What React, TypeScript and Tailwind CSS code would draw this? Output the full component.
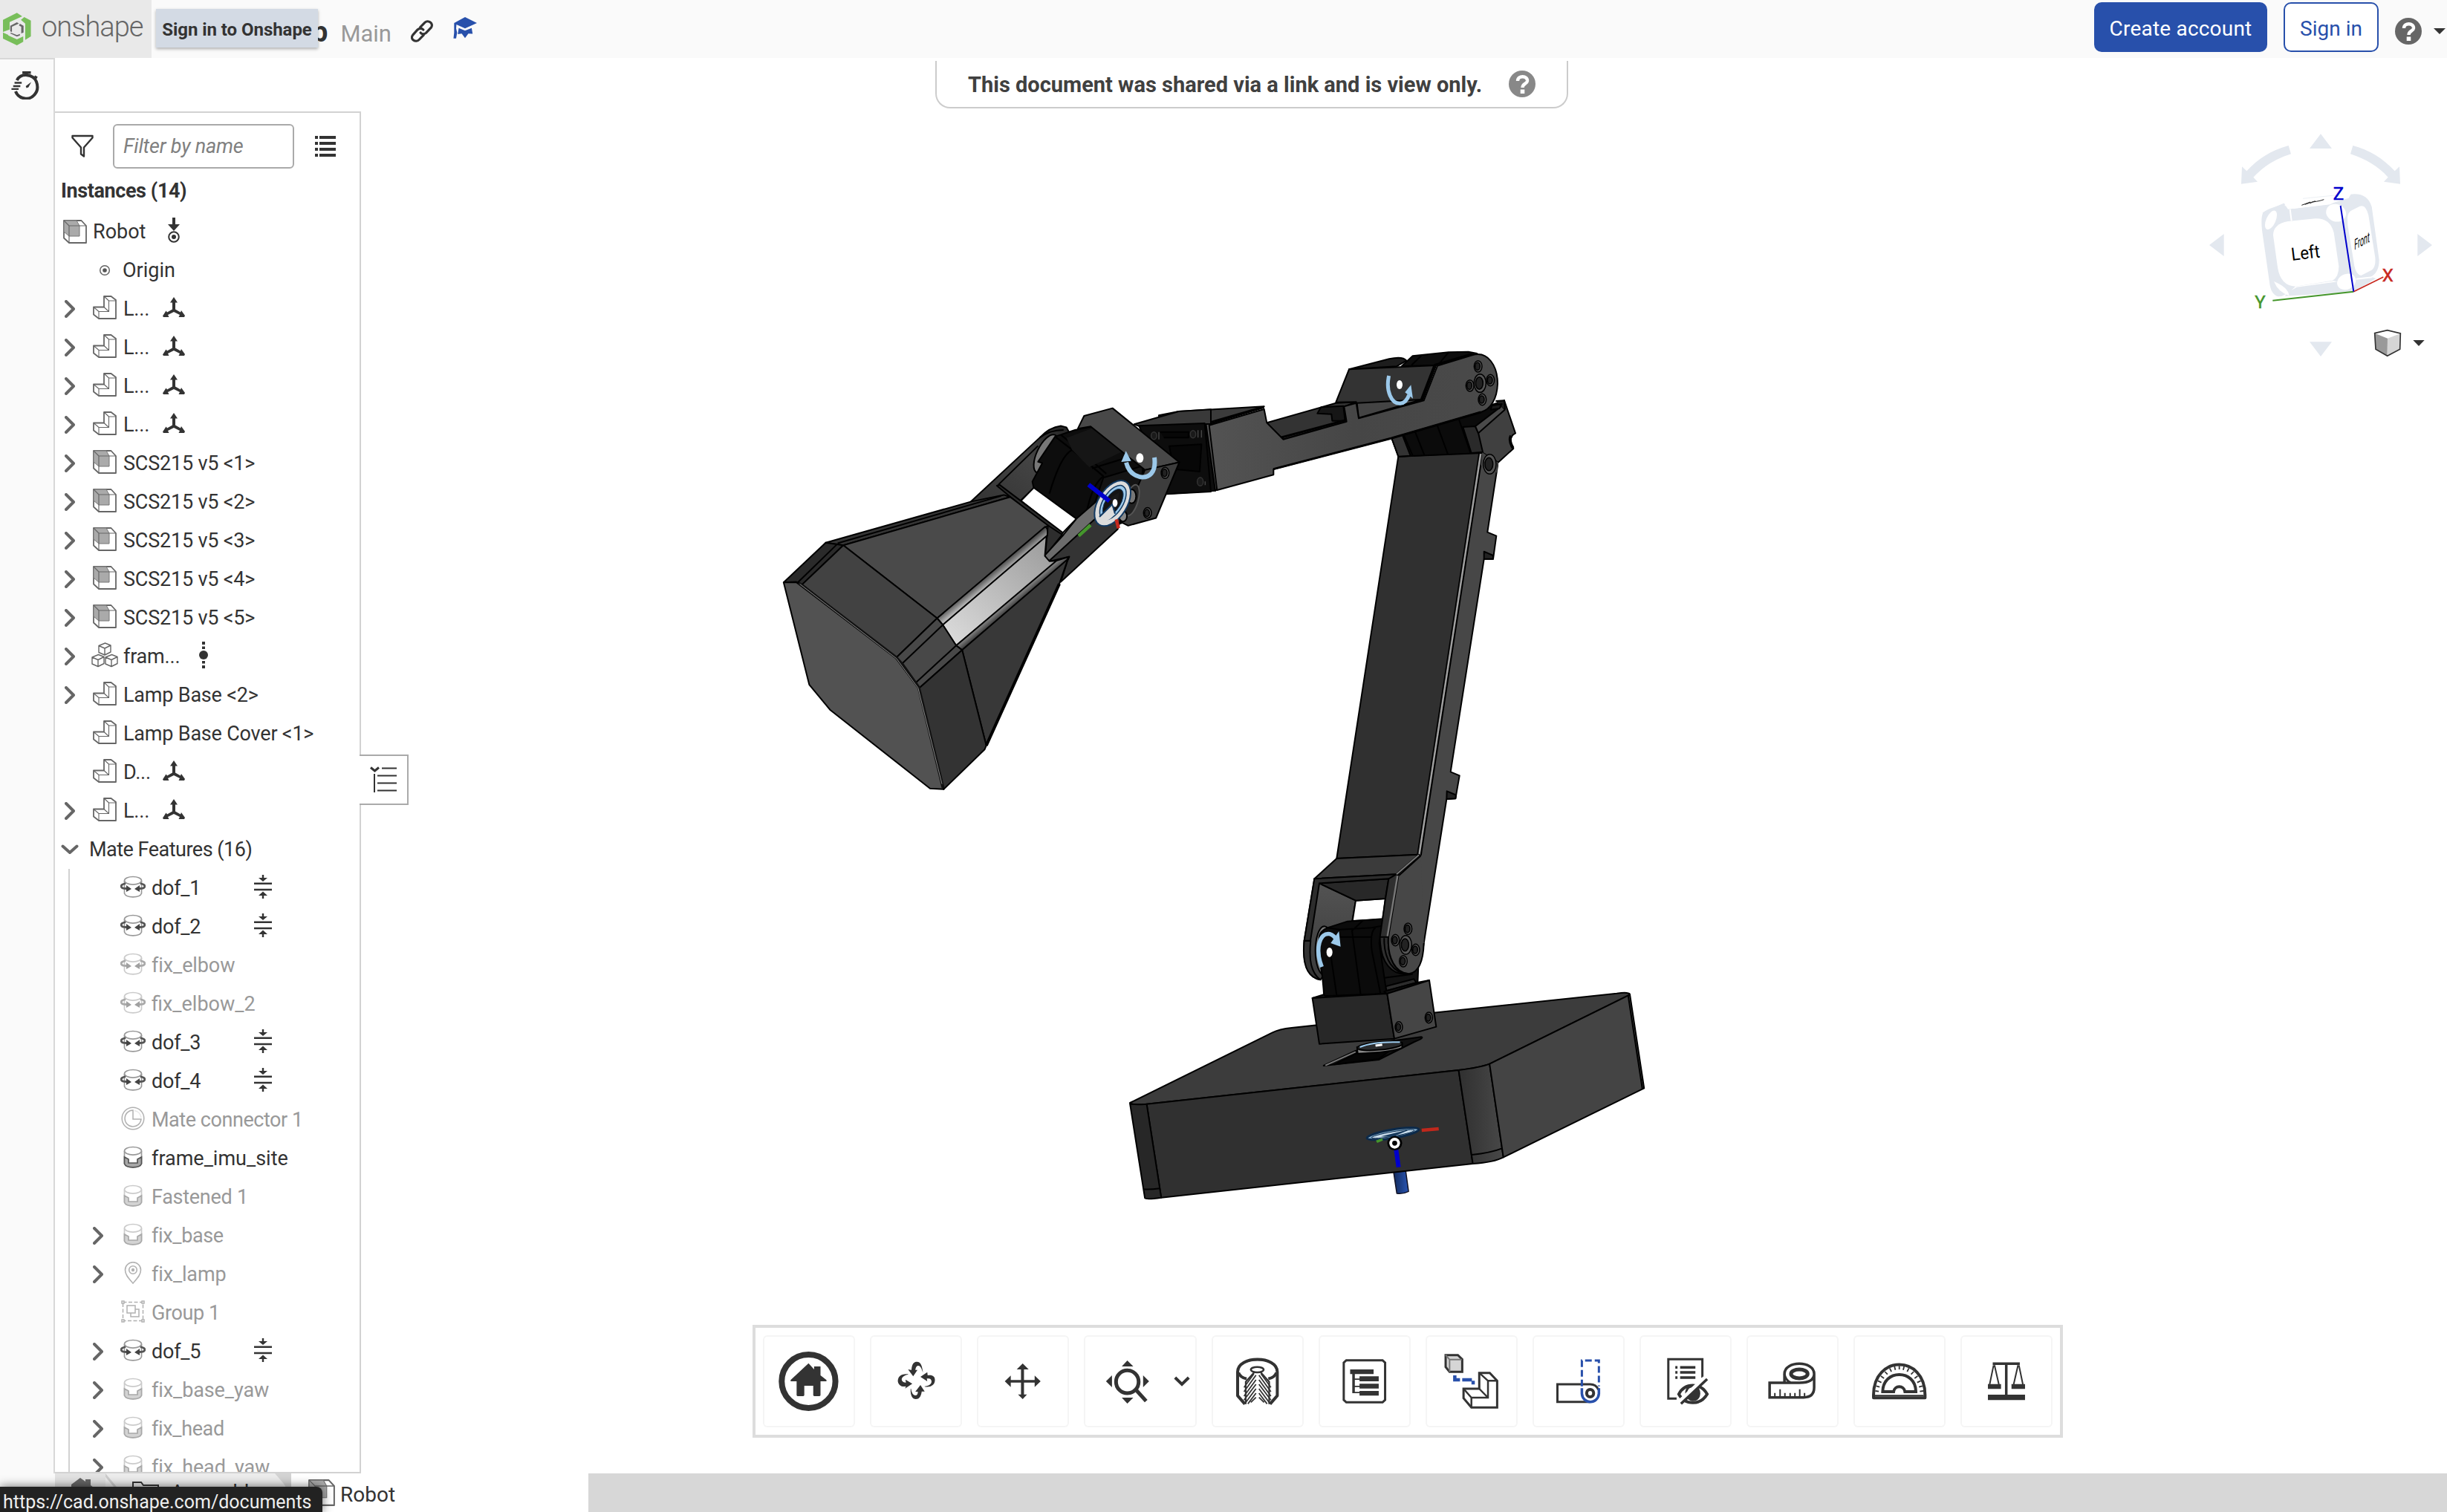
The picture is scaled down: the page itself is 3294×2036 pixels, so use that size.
import React from "react";

const NS = "[&_*]:[vector-effect:non-scaling-stroke]";

/* ---------- small icons ---------- */

function ChevronRight() {
  return (
    <svg width="14" height="24" viewBox="0 0 14 24" fill="none" stroke="#666" strokeWidth="4" strokeLinecap="round" strokeLinejoin="round">
      <path d="M2 2 L12 12 L2 22" />
    </svg>
  );
}

function PartIcon() {
  return (
    <svg width="32" height="32" viewBox="0 0 32 32" fill="#fff" stroke="#666" strokeWidth="1.8" strokeLinejoin="round">
      <path d="M15 1 H24.5 L31 6 V31 H8 L1 25.5 V15.5 H15 Z" />
      <path d="M15 1 L21.5 7 H31 M21.5 7 V21.5 H8 V31 M1 15.5 L8 21.5 M15 15.5 L21.5 21.5" fill="none" strokeWidth="1.1" />
    </svg>
  );
}

function AssemblyIcon({ size = 32 }: { size?: number }) {
  return (
    <svg width={size} height={size} viewBox="0 0 32 32" fill="#fff" stroke="#666" strokeWidth="1.8" strokeLinejoin="round">
      <path d="M1 1 H24.5 L31 8 V31 H8 L1 24.5 Z" />
      <path d="M1 1 H18 L22 8 V22 H8 L1 16 Z" fill="#aaa" stroke="#777" strokeWidth="1" />
      <path d="M1 1 L8 8 H31 M8 8 V31" fill="none" strokeWidth="1.2" />
    </svg>
  );
}

function CubesIcon() {
  const cube = "M0 3.5 L8.5 0 L16 3 V12 L8 16 L0 12.5 Z M0 3.5 L8 7 L16 3 M8 7 V16";
  return (
    <svg width="36" height="34" viewBox="0 0 36 34" fill="#fff" stroke="#666" strokeWidth="1.4" strokeLinejoin="round">
      <path d={cube} transform="translate(10 1)" />
      <path d={cube} transform="translate(1 16.5)" />
      <path d={cube} transform="translate(19 16.5)" />
    </svg>
  );
}

function TriadIcon() {
  return (
    <svg width="30" height="28" viewBox="0 0 30 28" fill="#333">
      <path d="M15 0 L20 7.5 H17 V16.5 L24 20.5 L25 18 L30 25 L29 27 H21.5 L23 24 L15 20 L7 24 L8.5 27 L1 27 L0 25.5 L4.5 18.5 L6 20.5 L13 16.5 V7.5 H10 Z" />
    </svg>
  );
}

function LimitsIcon() {
  return (
    <svg width="24" height="32" viewBox="0 0 24 32" fill="#333">
      <path d="M10.8 0 H13.2 V4 H18 L12 9 L6 4 H10.8 Z M0 10.6 H24 V13 H0 Z M0 18.8 H24 V21.2 H0 Z M12 22.5 L18 28 H13.2 V32 H10.8 V28 H6 Z" />
    </svg>
  );
}

function DotAxisIcon() {
  return (
    <svg width="12" height="36" viewBox="0 0 12 36" fill="#333">
      <path d="M4 0 H8 V4 H4 Z M4 6.5 H8 V10 H4 Z M4 26 H8 V29.5 H4 Z M4 32 H8 V36 H4 Z" />
      <circle cx="6" cy="18" r="6" />
    </svg>
  );
}

function RevoluteIcon() {
  return (
    <svg width="34" height="30" viewBox="0 0 34 30" fill="none">
      <path d="M5.5 7 V24 C8 30.5 26 30.5 28.5 24 V7" stroke="#999" strokeWidth="1.7" fill="#fff" />
      <ellipse cx="17" cy="6.8" rx="11.5" ry="5.3" stroke="#999" strokeWidth="1.7" fill="#fff" />
      <path d="M6 11 C-1.5 12.5 0 17.5 8 17.5 M28 11 C35.5 12.5 34 17.5 26 17.5" stroke="#555" strokeWidth="2.8" strokeLinecap="round" />
      <path d="M8 13 L15 18 L8 22 Z M26 13 L19 18 L26 22 Z" fill="#444" />
    </svg>
  );
}

function FastenedIcon() {
  return (
    <svg width="34" height="30" viewBox="0 0 34 30" fill="none">
      <path d="M5.5 7 V24 C8 30.5 26 30.5 28.5 24 V7" stroke="#999" strokeWidth="1.7" fill="#fff" />
      <ellipse cx="17" cy="6.8" rx="11.5" ry="5.3" stroke="#999" strokeWidth="1.7" fill="#fff" />
      <path d="M5.5 15 L11 18 V23 H23 V18 L28.5 15 V24 C26 30.5 8 30.5 5.5 24 Z" fill="#a8a8a8" stroke="#555" strokeWidth="1.7" />
    </svg>
  );
}

function ConnectorIcon() {
  return (
    <svg width="34" height="32" viewBox="0 0 34 32" fill="none" stroke="#666" strokeWidth="1.5">
      <circle cx="17" cy="16" r="14.8" />
      <path d="M17 5 A11 11 0 1 0 28 17 H17 Z" />
      <path d="M19 5.5 A11 11 0 0 1 28 15" strokeOpacity=".3" />
    </svg>
  );
}

function PinIcon() {
  return (
    <svg width="34" height="30" viewBox="0 0 34 30" fill="none" stroke="#666" strokeWidth="1.6">
      <path d="M17 29 C12 23 6.5 18 6.5 11 A10.5 10.3 0 0 1 27.5 11 C27.5 18 22 23 17 29 Z" />
      <circle cx="17" cy="11" r="5.3" />
      <circle cx="17" cy="11" r="2.2" fill="#666" stroke="none" />
    </svg>
  );
}

function GroupIcon() {
  return (
    <svg width="34" height="32" viewBox="0 0 34 32" fill="none" stroke="#666" strokeWidth="1.5">
      <path d="M3.5 3.5 H30.5 V28.5 H3.5 Z" strokeDasharray="5 2.5" />
      <path d="M2 2 H5 V5 H2 Z M29 2 H32 V5 H29 Z M2 27 H5 V30 H2 Z M29 27 H32 V30 H29 Z" fill="#fff" />
      <path d="M9 8 H20 V18 H9 Z M14 18 V23 H25 V13 H20" />
    </svg>
  );
}

const featureIcons = {
  rev: <RevoluteIcon />,
  fast: <FastenedIcon />,
  conn: <ConnectorIcon />,
  pin: <PinIcon />,
  group: <GroupIcon />,
};

/* ---------- instance tree ---------- */

type Instance = { name: string; icon: "part" | "asm" | "cubes"; open?: boolean; extra?: "triad" | "dot" };

const instances: Instance[] = [
  { name: "L...", icon: "part", open: true, extra: "triad" },
  { name: "L...", icon: "part", open: true, extra: "triad" },
  { name: "L...", icon: "part", open: true, extra: "triad" },
  { name: "L...", icon: "part", open: true, extra: "triad" },
  { name: "SCS215 v5 <1>", icon: "asm", open: true },
  { name: "SCS215 v5 <2>", icon: "asm", open: true },
  { name: "SCS215 v5 <3>", icon: "asm", open: true },
  { name: "SCS215 v5 <4>", icon: "asm", open: true },
  { name: "SCS215 v5 <5>", icon: "asm", open: true },
  { name: "fram...", icon: "cubes", open: true, extra: "dot" },
  { name: "Lamp Base <2>", icon: "part", open: true },
  { name: "Lamp Base Cover <1>", icon: "part" },
  { name: "D...", icon: "part", extra: "triad" },
  { name: "L...", icon: "part", open: true, extra: "triad" },
];

type Feature = { name: string; icon: keyof typeof featureIcons; ls: string; off?: boolean; open?: boolean; limits?: boolean };

const features: Feature[] = [
  { name: "dof_1", icon: "rev", ls: "tracking-[-0.25px]", limits: true },
  { name: "dof_2", icon: "rev", ls: "tracking-[-0.25px]", limits: true },
  { name: "fix_elbow", icon: "rev", ls: "tracking-[-0.1px]", off: true },
  { name: "fix_elbow_2", icon: "rev", ls: "tracking-[0px]", off: true },
  { name: "dof_3", icon: "rev", ls: "tracking-[-0.25px]", limits: true },
  { name: "dof_4", icon: "rev", ls: "tracking-[-0.25px]", limits: true },
  { name: "Mate connector 1", icon: "conn", ls: "tracking-[-0.45px]", off: true },
  { name: "frame_imu_site", icon: "fast", ls: "tracking-[0px]" },
  { name: "Fastened 1", icon: "fast", ls: "tracking-[-0.28px]", off: true },
  { name: "fix_base", icon: "fast", ls: "tracking-[-0.35px]", off: true, open: true },
  { name: "fix_lamp", icon: "pin", ls: "tracking-[-0.15px]", off: true, open: true },
  { name: "Group 1", icon: "group", ls: "tracking-[-0.4px]", off: true },
  { name: "dof_5", icon: "rev", ls: "tracking-[-0.25px]", open: true, limits: true },
  { name: "fix_base_yaw", icon: "fast", ls: "tracking-[-0.1px]", off: true, open: true },
  { name: "fix_head", icon: "fast", ls: "tracking-[-0.35px]", off: true, open: true },
  { name: "fix_head_yaw", icon: "fast", ls: "tracking-[-0.1px]", off: true, open: true },
];

function InstanceRow({ item }: { item: Instance }) {
  return (
    <div className="flex h-[52px] shrink-0 items-center pl-[13px]">
      <div className="flex w-[38px] shrink-0">{item.open && <ChevronRight />}</div>
      <div className={item.icon === "cubes" ? "-ml-0.5 mb-1 w-[43px] shrink-0" : "mb-1 w-[41px] shrink-0"}>
        {item.icon === "part" ? <PartIcon /> : item.icon === "asm" ? <AssemblyIcon /> : <CubesIcon />}
      </div>
      <div className={`shrink-0 whitespace-nowrap tracking-[-0.2px] ${item.extra === "triad" ? "w-[53px]" : item.extra === "dot" ? "w-[102px]" : ""}`}>
        {item.name}
      </div>
      {item.extra === "triad" && <div className="mb-1"><TriadIcon /></div>}
      {item.extra === "dot" && <div className="mb-1"><DotAxisIcon /></div>}
    </div>
  );
}

function FeatureRow({ item }: { item: Feature }) {
  return (
    <div className="flex h-[52px] items-center pl-[33px]">
      <div className="flex w-[37px] shrink-0">{item.open && <ChevronRight />}</div>
      <div className={`mb-1 w-[42px] shrink-0 ${item.off ? "opacity-50" : ""}`}>{featureIcons[item.icon]}</div>
      <div className={`w-[138px] shrink-0 whitespace-nowrap ${item.ls} ${item.off ? "text-[#999]" : ""}`}>{item.name}</div>
      {item.limits && <div className="mb-1"><LimitsIcon /></div>}
    </div>
  );
}

function InstancePanel() {
  return (
    <div className="flex h-[1834px] w-[412px] shrink-0 flex-col overflow-hidden border-y-2 border-r-2 border-[#d2d2d2] bg-white">
      <div className="flex h-[90px] shrink-0 items-center pl-[22px]">
        <svg width="30" height="32" viewBox="0 0 30 32" fill="none" stroke="#333" strokeWidth="2.4" strokeLinejoin="round">
          <path d="M1.5 2 H28.5 V4.5 L17 17.5 V29.5 L13 26.5 V17.5 L1.5 4.5 Z" />
        </svg>
        <div className="ml-[26px] flex h-[60px] w-[244px] items-center rounded-md border-2 border-[#aaa] pl-3 italic tracking-[-0.2px] text-[#808080]">
          Filter by name
        </div>
        <svg className="ml-7" width="28" height="28" viewBox="0 0 28 28" fill="#333">
          <path d="M0 0 H4 V4 H0 Z M6 0 H28 V4 H6 Z M0 8 H4 V12 H0 Z M6 8 H28 V12 H6 Z M0 16 H4 V20 H0 Z M6 16 H28 V20 H6 Z M0 24 H4 V28 H0 Z M6 24 H28 V28 H6 Z" />
        </svg>
      </div>
      <div className="flex h-[44px] shrink-0 items-start pl-2 pt-0.5 font-bold tracking-[-0.4px]">Instances (14)</div>
      <div className="flex h-[52px] shrink-0 items-center pl-[11px]">
        <AssemblyIcon />
        <span className="ml-[8px] w-[100px]">Robot</span>
        <svg className="mb-1" width="18" height="34" viewBox="0 0 18 34" fill="none">
          <path d="M7 0 H11 V9 H17 L9 18 L1 9 H7 Z" fill="#333" />
          <circle cx="9" cy="26" r="6.8" stroke="#333" strokeWidth="2" />
          <circle cx="9" cy="26" r="3" fill="#333" />
        </svg>
      </div>
      <div className="flex h-[52px] shrink-0 items-center pl-[59px]">
        <svg width="16" height="16" viewBox="0 0 16 16" fill="none">
          <circle cx="8" cy="8" r="6.3" stroke="#666" strokeWidth="1.5" />
          <circle cx="8" cy="8" r="2.8" fill="#555" />
        </svg>
        <span className="ml-[16px]">Origin</span>
      </div>
      {instances.map((it, i) => <InstanceRow key={i} item={it} />)}
      <div className="flex h-[52px] shrink-0 items-center pl-2">
        <svg width="24" height="14" viewBox="0 0 24 14" fill="none" stroke="#666" strokeWidth="4" strokeLinecap="round" strokeLinejoin="round">
          <path d="M2.5 2.5 L12 11 L21.5 2.5" />
        </svg>
        <span className="ml-[14px] tracking-[-0.5px]">Mate Features (16)</span>
      </div>
      <div className="ml-[18px] h-[812px] shrink-0 border-l-2 border-[#d2d2d2]">
        <div className="-ml-0.5">{features.map((f) => <FeatureRow key={f.name} item={f} />)}</div>
      </div>
    </div>
  );
}

/* ---------- header ---------- */

function HelpIcon({ color }: { color: string }) {
  return (
    <svg width="36" height="36" viewBox="0 0 36 36" fill="none">
      <circle cx="18" cy="18" r="18" fill={color} />
      <path d="M12 14 C12 6 25.5 6.5 25 14 C24.6 18 18.5 17.5 18.5 23" stroke="#fff" strokeWidth="4.4" />
      <path d="M15.7 25.5 H21.3 V31 H15.7 Z" fill="#fff" />
    </svg>
  );
}

function Caret() {
  return (
    <svg width="16" height="8" viewBox="0 0 16 8" fill="#333"><path d="M0 0 H16 L8 8 Z" /></svg>
  );
}

function Header() {
  return (
    <header className="relative flex h-[78px] shrink-0 items-start bg-[#fafafa]">
      <div className="flex h-[78px] w-[204px] items-start bg-[#e9e9e9]">
        <svg className={`mt-[17px] ml-1 shrink-0 ${NS}`} width="38" height="44" viewBox="9 50 85 132" preserveAspectRatio="none">
          <path d="M51 51 L67 65 L29 88 V118 L9 128 V79 Z" fill="#78be5a" />
          <path d="M63 79 L73 68 L93 82 V146 L76 160 V94 Z" fill="#78be5a" />
          <path d="M9 130 L25 140 V142 L51 158 L70 146 V168 L51 182 L9 155 Z" fill="#78be5a" />
          <path d="M51 89 L57 94 L36 107 V128 L31 126 V103 Z M60 95 L71 103 V130 L64 134 V107 L57 102 Z M33 131 L51 141 L60 136 V142 L51 147 L31 134 Z" fill="#666" />
        </svg>
        <span className="ml-[14px] mt-[11px] text-[38px] font-light leading-[50px] tracking-[-1px] text-[#666]">onshape</span>
      </div>
      <span className="ml-[216px] mt-[21px] text-[38px] font-bold leading-[44px] text-[#333]">p</span>
      <span className="ml-[17px] mt-[26px] text-[31px] leading-10 text-[#999]">Main</span>
      <svg className={`ml-[26px] mt-[27px] ${NS}`} width="30" height="30" viewBox="1239 82 66 88" preserveAspectRatio="none" fill="none" stroke="#333" strokeWidth="3.2" strokeLinecap="round">
        <path d="M1267 110 L1281 91 C1290 80 1308 95 1299 112 L1284 133 C1279 139 1271 138 1268 132" />
        <path d="M1277 141 L1264 159 C1254 173 1235 158 1245 141 L1259 120 C1264 114 1272 114 1276 120" />
      </svg>
      <svg className="ml-[27px] mt-[23px]" width="32" height="29" viewBox="1368 68 72 86" preserveAspectRatio="none" fill="#2850ab">
        <path d="M1404 68 L1440 92 L1404 113 L1378 98 L1377 113 L1380 130 L1377 153 H1369 L1371 130 V92 Z" />
        <path d="M1385 112 L1404 122 L1424 112 L1427 135 L1414 134 L1404 152 L1394 134 L1382 136 Z" />
      </svg>
      <div className="grow" />
      <div className="mt-[3px] flex h-[67px] w-[233px] items-center justify-center rounded-[10px] bg-[#2850ab] pt-[4px] text-[28px] text-white">
        <span className="tracking-[0.2px]">Create account</span>
      </div>
      <div className="ml-[22px] mt-[3px] flex h-[67px] w-[128px] items-center justify-center rounded-[10px] border-2 border-[#2850ab] bg-white pt-[4px] text-[28px] text-[#2850ab]">
        <span>Sign in</span>
      </div>
      <div className="ml-[22px] mt-6"><HelpIcon color="#666" /></div>
      <div className="ml-4 mr-0.5 mt-[38px]"><Caret /></div>
      <div className="absolute left-[210px] top-3 flex h-[52px] w-[218px] items-center justify-center bg-[#d3dae4] pt-[3px] text-[24px] font-bold text-[#333] shadow-[0_2px_4px_rgba(0,0,0,0.3)]">
        <span className="whitespace-nowrap tracking-[-0.05px]">Sign in to Onshape</span>
      </div>
    </header>
  );
}

/* ---------- view cube ---------- */

function ViewCube() {
  const c = "#e3e8ef";
  return (
    <svg className="absolute right-0 top-0" width="514" height="500" viewBox="0 0 1542 1500" fill="none">
      <g fill={c}>
        <path d="M1032 541 L1077 600 H987 Z M1032 1440 L1077 1381 H987 Z M582 990 L641 945 V1035 Z M1482 990 L1423 945 V1035 Z" />
        <path d="M902 588 L912 622 C850 642 800 672 760 716 L777 734 L711 743 L714 673 L733 691 C780 640 835 606 902 588 Z" />
        <path d="M1162 588 L1152 622 C1214 642 1264 672 1304 716 L1287 734 L1353 743 L1350 673 L1331 691 C1284 640 1229 606 1162 588 Z" />
        <path d="M798 862 Q800 850 885 823 L900 845 L1070 826 L1150 785 Q1220 775 1238 835 L1268 1050 Q1268 1100 1235 1118 L1255 1125 L1165 1180 L860 1198 Q830 1190 825 1140 L795 930 Q790 880 798 862 Z" />
      </g>
      <path d="M885 830 L960 800 L1155 782 L1145 800 L1060 826 L920 843 Z" fill="#fff" />
      <path d="M798 862 L885 823" stroke={c} strokeWidth="6" />
      <path d="M960 802 L1100 788" stroke={c} strokeWidth="2" />
      <path d="M840 950 Q840 905 900 894 L1010 883 Q1070 880 1085 940 L1105 1075 Q1105 1120 1080 1133 L930 1157 Q870 1155 858 1080 Z" fill="#fff" />
      <path d="M1140 880 Q1142 855 1160 848 L1190 833 Q1215 825 1225 870 L1252 1040 Q1256 1085 1230 1095 L1195 1113 Q1175 1110 1168 1075 L1141 910 Z" fill="#fff" />
      <ellipse cx="831" cy="889" rx="19" ry="41" transform="rotate(24 831 889)" fill="#fff" />
      <ellipse cx="1094" cy="860" rx="41" ry="35" transform="rotate(20 1094 860)" fill="#fff" />
      <ellipse cx="1136" cy="1138" rx="39" ry="31" transform="rotate(-25 1136 1138)" fill="#fff" />
      <path d="M843 1137 Q900 1160 905 1195 Q860 1180 843 1137 Z M855 1203 Q900 1190 930 1157 L1085 1135 L1100 1138 L935 1160 Q890 1185 885 1200 Z" fill="#fff" />
      <path d="M908 845 L914 892 M1175 1127 L1240 1120" stroke="#fff" strokeWidth="6" />
      <path d="M955 829 L990 816 M968 826 L1010 812 M990 822 C1000 812 1010 818 1045 806" stroke="#222" strokeWidth="3" />
      <text x="0" y="0" transform="translate(916 1053) rotate(-7)" fontSize="72" fill="#000" textLength="116" lengthAdjust="spacingAndGlyphs">Left</text>
      <text x="0" y="0" transform="translate(1168 1010) matrix(.56 -.3 0 1 0 0)" fontSize="60" fill="#000" textLength="110" lengthAdjust="spacingAndGlyphs">Front</text>
      <path d="M1165 1178 L838 1214" stroke="#45962c" strokeWidth="6" />
      <path d="M1165 1178 L1285 1119" stroke="#c8281e" strokeWidth="5" />
      <path d="M1112 831 L1165 1178" stroke="#00c" strokeWidth="6" />
      <g fontSize="72" strokeWidth="1.5">
        <text x="1082" y="807" fill="#00c" stroke="#00c">Z</text>
        <text x="766" y="1246" fill="#45962c" stroke="#45962c">Y</text>
        <text x="1280" y="1137" fill="#c8281e" stroke="#c8281e">X</text>
      </g>
      <path d="M1250 1346 L1301 1334 L1354 1347 L1352 1411 L1301 1438 L1254 1411 Z" fill="#fff" />
      <path d="M1250 1346 L1302 1367 L1301 1438 L1254 1411 Z" fill="#999" />
      <path d="M1354 1347 L1302 1367 L1301 1438 L1352 1411 Z" fill="#d5d5d5" />
      <path d="M1250 1346 L1301 1334 L1354 1347 L1352 1411 L1301 1438 L1254 1411 Z" stroke="#333" strokeWidth="5" />
      <path d="M1405 1374 H1451 L1428 1398 Z" fill="#333" />
    </svg>
  );
}

/* ---------- 3D model ---------- */

function Hole({ x, y, r = 16, q = 23 }: { x: number; y: number; r?: number; q?: number }) {
  return (
    <g>
      <ellipse cx={x} cy={y} rx={r} ry={q} fill="#555" stroke="#000" strokeWidth="1.5" />
      <ellipse cx={x - r * 0.12} cy={y} rx={r * 0.62} ry={q * 0.66} fill="#222" stroke="#000" strokeWidth="1.5" />
    </g>
  );
}

function LampBase() {
  return (
    <g transform="translate(1490 1300) scale(.47831 .33333)">
      <path d="M807 835 L841 830 L849 913 Q832 925 816 921 Z" fill="url(#pin)" stroke="#112" strokeWidth="1.5" />
      <path d="M65 555 L465 272 Q485 257 520 252 L1435 113 Q1472 106 1472 118 L1077 398 Q1050 413 990 423 L112 560 Q65 565 65 555 Z" fill="#3c3c3c" />
      <path d="M112 560 L990 423 L1030 801 L153 938 Z" fill="#303030" />
      <path d="M65 558 Q75 564 112 560 L153 938 Q110 947 107 940 Z" fill="#272727" />
      <path d="M990 423 Q1050 413 1077 398 L1116 775 Q1090 795 1030 801 Z" fill="url(#corner)" />
      <path d="M1077 398 L1472 118 L1512 496 L1116 775 Z" fill="#444" />
      <path d="M105 904 Q120 906 149 901 M1027 765 Q1080 757 1112 739 M1467 121 L1507 498 M1503 463 L1509 460" />
      <path d="M610 405 L700 345 L800 305 L885 289 Q895 292 865 309 L765 381 Z" fill="#111" />
      <path d="M640 400 L705 352 L800 340 L765 378 Z" fill="#050505" />
      <path d="M615 404 L700 349" stroke="#777" />
      <path d="M704 330 L831 312 V333 Q800 352 706 356 Z" fill="#8a8a8a" />
      <ellipse cx="768" cy="325" rx="64" ry="16" transform="rotate(-8 768 325)" fill="#2a2c2e" />
      <path d="M712 330 Q750 306 825 310" stroke="#9ccbee" strokeWidth="2" />
      <path d="M756 324 L775 320" stroke="#fff" strokeWidth="3" />
      <g transform="rotate(-14 805 680)">
        <ellipse cx="805" cy="680" rx="75" ry="17" fill="#7fa9c8" stroke="#0c2a4a" strokeWidth="3" />
        <ellipse cx="805" cy="681" rx="62" ry="9" fill="#c9dceb" stroke="#0c2a4a" strokeWidth="1" />
        <path d="M770 682 L860 674 L800 692 Z" fill="#16395c" stroke="none" />
      </g>
      <path d="M886 666 L934 660" stroke="#c0281c" strokeWidth="4.5" />
      <path d="M757 707 L775 698 L777 707 L761 717 Z" fill="#45962c" stroke="none" />
      <path d="M814 745 L821 815" stroke="#00c" strokeWidth="6" />
      <ellipse cx="810" cy="718" rx="21" ry="29" fill="#000" stroke="none" />
      <ellipse cx="810" cy="718" rx="15" ry="22" fill="#fff" stroke="none" />
      <ellipse cx="810" cy="718" rx="7" ry="10" fill="#000" stroke="none" />
    </g>
  );
}

function LowerArm() {
  return (
    <g>
      <path d="M1882.3 614.7 L1993.3 609.3 L1910 1150.7 L1799.3 1156 Z" fill="#303030" />
      <path d="M1995 609 L1985 600 L2016 620 L2016 627 L2002.3 716.7 L2014.3 721.7 L2010 752.7 L1997.7 752.7 L1952.7 1039.3 L1964.7 1044.3 L1959.3 1075.3 L1947.3 1076 L1916.7 1270 C1914 1300 1900 1312 1888 1311 C1866 1306 1858 1270 1867 1253 L1882 1177 L1912 1151 Z" fill="#474747" />
      <path d="M1993.5 609.5 L1910.5 1150.5" stroke="#a0a0a0" strokeWidth="2.5" />
      <path d="M1991 610 L1908 1151 M1996 610 L1913 1152" strokeWidth="1.5" />
      <path d="M1997.7 742.7 L2010 748 L2010 752.7 L1997.7 752.7 Z M1947.7 1065.3 L1960 1070.5 L1959.3 1075.3 L1947.3 1076 Z" fill="#222" />
      <g transform="translate(1720 960) scale(.33333)">
        <path d="M148 670 L107 920 C100 1010 118 1068 172 1078 L210 1030 L300 845 L315 758 L168 688 Z" fill="url(#inner)" />
        <path d="M107 920 C98 1010 118 1068 172 1078 C135 1050 125 1000 133 920 Z" fill="#333" />
        <path d="M315 758 L435 750 L424 834 L302 840 Z" fill="#fff" />
        <path d="M168 688 L448 670 L435 750 L315 758 Z" fill="#282828" />
        <path d="M238 588 L570 572 L478 652 L148 670 Z" fill="#3b3b3b" />
        <path d="M148 670 L478 652 L447 700 L448 670 L168 688 L132 920 L107 920 Z" fill="#2c2c2c" />
        <ellipse cx="188" cy="960" rx="36" ry="98" fill="#777" />
        <path d="M412 900 L568 1020 L565 1095 L430 1134 Z" fill="#121212" />
        <path d="M435 1105 L550 1075 L560 1090 L440 1122 Z M430 1070 L545 1055" fill="#2c2c2c" />
        <path d="M168 930 Q160 885 200 868 L282 842 L425 832 L410 930 L440 1134 L187 1144 Q180 1040 168 1000 Z" fill="#0b0b0b" />
        <path d="M200 868 L250 875 L380 868 L420 860 M238 1140 L210 950 M335 1138 L300 880 L345 838 M415 1134 L380 960 Q372 880 395 868 M250 905 L380 905" stroke="#000" />
        <path d="M435 750 L448 670 L478 652 L488 655 L447 905 C442 990 475 1050 530 1055 C460 1062 413 1010 413 905 Z" fill="#2f2f2f" />
        <path d="M488 655 L578 577 L590 930 C590 1000 570 1045 530 1054 C475 1050 442 990 447 905 Z" fill="#474747" stroke="none" />
        <path d="M488 655 L447 905 C442 990 475 1050 530 1054 C570 1048 588 1000 590 930" />
        <path d="M484 658 L443 903" stroke="#777" strokeWidth="2.5" />
        <path d="M570 574 L480 652" stroke="#777" strokeWidth="2" />
        <path d="M578 577 L490 656" />
        <path d="M413 905 L447 905 M430 910 C428 1000 470 1052 525 1054" fill="none" />
        <Hole x={526} y={872} /><Hole x={475} y={918} /><Hole x={557} y={957} /><Hole x={507} y={1003} />
        <Hole x={517} y={937} r={24} q={38} />
        <path d="M140 1152 L185 1138 L200 1148 L442 1134 L430 1126 L560 1090 L612 1080 L442 1134 Z" fill="#161616" />
        <path d="M140 1152 L442 1134 L471 1316 L168 1337 Z" fill="#282828" />
        <path d="M442 1134 L612 1080 L640 1268 L471 1316 Z" fill="#454545" />
        <Hole x={489} y={1269} r={15} q={22} /><Hole x={610} y={1231} r={15} q={22} />
        <path d="M178 1026 C148 950 172 885 210 893 C224 897 232 906 238 920" stroke="#9cc9ea" strokeWidth="5.5" />
        <path d="M214 930 L247 882 L254 944 Z" fill="#9cc9ea" stroke="none" />
        <ellipse cx="209" cy="967" rx="12" ry="19" fill="#fff" stroke="none" />
      </g>
    </g>
  );
}

function UpperArm() {
  return (
    <g transform="translate(1560 440) scale(.33333)">
      <path d="M940 450 L1180 370 L1395 298 L1310 510 L967 524 Z" fill="#0b0b0b" />
      <path d="M940 450 L983 436 L1016 521 L967 524 Z" fill="#333" />
      <path d="M1035 425 L1072 518 M1125 400 L1167 515 M1212 375 L1258 508 M990 440 L1025 520" stroke="#000" />
      <path d="M1340 330 L1395 298 L1440 430 Q1418 440 1420 470 L1432 492 L1370 548 L1306 508 L1285 430 L1395 335 L1390 318 Z" fill="#404040" />
      <path d="M1228 405 L1278 402 L1290 428 L1308 506 L1262 510 Z" fill="#2a2a2a" />
      <path d="M1278 402 L1385 320 L1397 335 L1290 430 Z" fill="#4a4a4a" />
      <path d="M1345 318 L1385 312 L1375 330 L1340 335 Z M1360 300 L1395 298 L1398 335" fill="#1a1a1a" />
      <path d="M1422 440 Q1412 460 1430 490" stroke="#000" strokeWidth="4" />
      <path d="M1306 508 L1370 548 L1366 590 L1300 560 Z" fill="#444" stroke="none" />
      <Hole x={1336} y={555} r={26} q={40} />
      <path d="M0 358 L80 342 L425 322 L190 390 L0 402 Z" fill="#3b3b3b" />
      <path d="M-60 402 L190 390 L228 662 L30 675 L-60 670 Z" fill="#0d0d0d" />
      <path d="M38 488 L160 477 L172 580 L60 590 Z M0 425 L120 415 M0 460 L185 462 M60 600 L205 600" fill="#070707" stroke="#000" />
      <g fill="#1a1a1a" stroke="#333" strokeWidth="1.5">
        <ellipse cx="137" cy="431" rx="11" ry="16" /><ellipse cx="167" cy="627" rx="11" ry="16" />
        <path d="M158 418 V440 M175 412 V445 M185 615 V645" stroke="#444" />
      </g>
      <path d="M190 392 L205 388 L240 655 L228 662 Z" fill="#555" />
      <path d="M436 388 L715 308 L797 304 L748 322 L758 383 L502 455 Z" fill="#333" />
      <path d="M640 350 L655 325 L745 320 L752 380 L700 380 L697 353 Z" fill="#161616" />
      <path d="M768 172 L930 130 Q985 118 1000 137 L960 160 Z" fill="#1d1d1d" />
      <path d="M980 160 L1025 118 L1170 103 L1250 101 L1285 108 L1118 155 Z" fill="#0d0d0d" />
      <path d="M715 305 L768 172 L1120 156 L1065 298 L807 366 L797 304 Z" fill="#333" />
      <path d="M800 308 L1062 294 L807 368 Z" fill="#444" />
      <path d="M1170 103 L1135 145 M1060 117 L1020 155" stroke="#000" />
      <path d="M203 398 L425 333 L436 388 L502 455 L758 383 L748 322 L797 308 L807 370 L1070 298 L1125 158 L1265 115 C1330 95 1368 160 1368 230 C1366 290 1340 335 1300 345 L940 450 L463 575 L463 598 L235 660 Z" fill="url(#upper)" />
      <path d="M1112 155 L1265 110 M1112 158 L1060 293 M495 447 L755 377 M205 392 L425 325" strokeWidth="3" />
      <path d="M1300 345 L940 450 L463 575" strokeWidth="3" />
      <Hole x={1289} y={160} /><Hole x={1339} y={216} /><Hole x={1256} y={238} /><Hole x={1306} y={294} />
      <Hole x={1297} y={228} r={24} q={37} />
      <path d="M929 198 C915 260 940 312 975 310 C995 308 1004 292 1010 276" stroke="#9cc9ea" strokeWidth="5" />
      <path d="M994 265 L1018 235 L1026 290 Z" fill="#9cc9ea" stroke="none" />
      <ellipse cx="972" cy="234" rx="12" ry="18" fill="#fff" stroke="none" />
    </g>
  );
}

function LampHead() {
  return (
    <g>
      <g transform="translate(1370 530) scale(.33333)">
        <path d="M470 124 L650 72 L780 64 L780 122 L500 135 Z" fill="#393939" />
        <path d="M490 130 L755 120 L780 396 L600 406 Z" fill="#0d0d0d" />
        <path d="M612 212 L742 205 L735 315 L630 305 Z M575 155 H690 V178 H590" fill="#070707" stroke="#000" />
        <g fill="#1a1a1a" stroke="#333" strokeWidth="1.5">
          <ellipse cx="550" cy="170" rx="11" ry="15" /><ellipse cx="708" cy="164" rx="11" ry="15" /><ellipse cx="737" cy="356" rx="12" ry="17" />
          <path d="M570 155 V185 M728 148 V178 M742 148 V178 M757 355 V370" stroke="#444" />
        </g>
      </g>
      <g transform="translate(1030 520) scale(.38265 .35714)">
        <path d="M722 437 L965 195 Q1000 155 1040 150 L1060 155 L1070 175 L1020 215 L945 385 L898 432 L860 415 Z" fill="url(#fork)" />
        <path d="M820 372 L960 225 M965 195 Q1000 165 1050 165" fill="none" />
        <ellipse cx="988" cy="255" rx="32" ry="78" transform="rotate(24 988 255)" fill="#777" />
        <path d="M940 360 L975 290 L960 285 L1020 190 L1090 165 L1150 152 L1335 290 L1330 420 L1200 440 L1095 500 L945 385 Z" fill="#0d0d0d" />
        <path d="M1020 190 L1080 240 L1190 340 Q1150 370 1130 480 M1040 183 L1100 235 L1200 330 M1080 240 Q1040 260 1000 405 M1080 240 L1210 205 M1150 310 L1270 270" stroke="#000" strokeWidth="2.2" />
        <path d="M1060 195 L1160 155 L1260 245 L1140 305 L1080 240 Z" fill="#161616" stroke="none" />
        <path d="M1190 345 L1330 300 L1310 500 L1240 520 L1150 470 Z" fill="#141414" />
        <path d="M1100 160 L1122 112 L1222 83 L1457 287 L1336 316 L1145 152 Z" fill="#484848" />
        <path d="M1457 287 L1375 497 L1277 526 L1255 514 L1336 316 Z" fill="#3d3d3d" />
        <ellipse cx="1290" cy="430" rx="22" ry="60" transform="rotate(15 1290 430)" fill="#222" stroke="#555" />
        <Hole x={1407} y={327} r={14} q={21} /><Hole x={1345} y={478} r={14} q={20} />
        <path d="M945 383 L1095 500 L1045 555 L900 432 Z" fill="#fff" />
        <path d="M815 375 L825 372 L1048 553 L1040 562 L995 530 L860 415 Z" fill="#2b2b2b" />
        <path d="M995 525 L1045 560 L985 640 Z" fill="#2d2d2d" />
        <path d="M982 640 L1165 450 L1280 400 L1240 540 L1040 738 L1068 643 L995 662 Z" fill="#343434" />
        <path d="M982 640 L1050 560 L1095 500 L1170 430 L1192 470 L1000 658 L990 655 Z" fill="#6c6c6c" />
        <path d="M213 590 L725 435 L840 410 L862 418 L275 600 Z" fill="#343434" />
        <path d="M255 592 L830 414" />
        <path d="M65 740 L213 590 L275 600 L130 748 L110 738 Z" fill="#2a2a2a" />
        <path d="M115 740 L255 594" />
        <path d="M275 600 L862 418 L995 525 L605 875 Z" fill="#4a4a4a" />
        <path d="M130 748 L275 600 L605 875 L460 1025 Z" fill="#424242" />
        <path d="M605 875 L985 530 Q997 535 992 565 L625 900 Z" fill="url(#stripA)" />
        <path d="M625 900 L990 565 L984 640 L1000 660 L1030 658 L672 978 Z" fill="url(#shine)" />
        <path d="M672 978 L1025 658 L1070 643 L1065 655 L693 995 Z" fill="url(#stripB)" />
        <path d="M460 1025 L605 875 L625 900 L672 978 L693 995 L540 1140 Z" fill="#484848" />
        <path d="M480 1048 L625 900 M530 1118 L672 978" />
        <path d="M693 995 L1065 652 L1035 745 L778 1355 Z" fill="#383838" />
        <path d="M540 1140 L693 995 L778 1355 L772 1370 L628 1520 Z" fill="#333" />
        <path d="M1035 745 L778 1355" strokeWidth="4" />
        <path d="M65 740 L110 740 L460 1025 L540 1140 L628 1520 L580 1517 L228 1220 L155 1125 Z" fill="#525252" />
        <path d="M118 742 L462 1024 L482 1048 L540 1135 L626 1515" strokeWidth="4" stroke="#111" />
        <path d="M122 746 L462 1027 L538 1138 L622 1500" strokeWidth="1" stroke="#888" />
      </g>
      <g transform="translate(1370 530) scale(.33333)">
        <ellipse cx="460" cy="415" rx="18" ry="28" fill="#777" />
        <ellipse cx="425" cy="495" rx="16" ry="22" fill="#888" />
        <g transform="rotate(32 383 443)">
          <ellipse cx="383" cy="443" rx="58" ry="102" fill="#dcdcdc" stroke="#123a63" strokeWidth="2" />
          <ellipse cx="383" cy="440" rx="40" ry="78" fill="#9cc9ea" stroke="#123a63" strokeWidth="1.5" />
          <ellipse cx="383" cy="440" rx="30" ry="62" fill="#141414" stroke="#123a63" strokeWidth="1" />
        </g>
        <path d="M330 500 L380 448 L392 488 Q360 525 322 520 Z" fill="#dcdcdc" stroke="none" />
        <path d="M330 498 L382 447 L393 485" stroke="#123a63" strokeWidth="2" />
        <path d="M362 430 L410 398 L402 450 Z" fill="#1a1a1a" stroke="none" />
        <ellipse cx="393" cy="442" rx="10" ry="16" fill="#fff" stroke="none" />
        <path d="M286 368 L370 434" stroke="#00c" strokeWidth="6" />
        <path d="M246 575 L294 531" stroke="#45962c" strokeWidth="4.5" />
        <path d="M398 508 L407 544" stroke="#c8281e" strokeWidth="4.5" />
        <path d="M552 258 C560 320 530 342 495 337 C462 330 445 305 438 278" stroke="#9cc9ea" strokeWidth="6" />
        <path d="M418 276 L437 232 L458 272 Z" fill="#9cc9ea" stroke="none" />
        <ellipse cx="493" cy="260" rx="15" ry="19" fill="#fff" stroke="none" />
      </g>
    </g>
  );
}

function Model() {
  return (
    <svg className={`absolute left-[1000px] top-[440px] ${NS}`} width="1300" height="1200" viewBox="1000 440 1300 1200" fill="none" stroke="#000" strokeWidth="2" strokeLinejoin="round">
      <defs>
        <linearGradient id="pin"><stop offset="0" stopColor="#122a5c" /><stop offset="1" stopColor="#2a56b4" /></linearGradient>
        <linearGradient id="corner"><stop offset="0" stopColor="#303030" /><stop offset="1" stopColor="#484848" /></linearGradient>
        <linearGradient id="upper"><stop offset="0" stopColor="#535353" /><stop offset=".5" stopColor="#464646" /><stop offset="1" stopColor="#4a4a4a" /></linearGradient>
        <linearGradient id="inner" x1="0" y1="0" x2="0" y2="1"><stop offset="0" stopColor="#545454" /><stop offset="1" stopColor="#3a3a3a" /></linearGradient>
        <linearGradient id="fork" x1="0" y1="1" x2="1" y2="0"><stop offset="0" stopColor="#333" /><stop offset=".6" stopColor="#444" /><stop offset="1" stopColor="#222" /></linearGradient>
        <linearGradient id="shine" x1="0" y1="1" x2="1" y2="0"><stop offset="0" stopColor="#dedede" /><stop offset="1" stopColor="#989898" /></linearGradient>
        <linearGradient id="stripA" gradientUnits="userSpaceOnUse" x1="790" y1="705" x2="810" y2="728"><stop offset="0" stopColor="#4a4a4a" /><stop offset="1" stopColor="#b0b0b0" /></linearGradient>
        <linearGradient id="stripB" gradientUnits="userSpaceOnUse" x1="840" y1="825" x2="858" y2="845"><stop offset="0" stopColor="#8a8a8a" /><stop offset="1" stopColor="#383838" /></linearGradient>
      </defs>
      <LampBase />
      <LowerArm />
      <UpperArm />
      <LampHead />
    </svg>
  );
}

/* ---------- bottom toolbar ---------- */

type Tool = { box: string; wide?: boolean; art: React.ReactNode };
const D = "#333";
const B = "#2850ab";

const tools: Tool[] = [
  {
    box: "48 84 216 372",
    art: (
      <>
        <ellipse cx="155" cy="270" rx="63" ry="108" stroke={D} strokeWidth="8" />
        <path d="M155 197 L168 222 V210 H183 V246 L197 265 V270 H183 V327 L181 330 H168 L166 327 V288 H145 V327 L143 330 H129 L127 327 V270 H113 V265 Z" fill={D} />
      </>
    ),
  },
  {
    box: "298.5 84 216 372",
    art: (
      <path
        fill={D}
        d="M396 224 C397 198 402 191 409 191 C418 191 421 208 423 235 C419 215 416 206 411 207 C407 209 406 216 405 224 L410 224 L400 250 L388 222 Z M388 241 C372 238 364 250 364 270 C366 288 374 294 383 290 L381 299 L398 280 L382 263 L383 275 C377 276 373 270 373 262 C374 252 380 245 388 243 Z M394 300 C393 330 399 342 406 342 C416 342 419 325 420 311 H427 L417 285 L405 312 H411 C411 322 409 327 405 327 C400 327 396 315 395 300 Z M427 292 C441 296 451 285 451 265 C451 250 445 243 434 246 L433 233 L417 252 L433 270 L432 259 C440 258 443 262 443 272 C442 282 437 288 427 290 Z"
      />
    ),
  },
  {
    box: "549.5 84 216 372",
    art: <path fill={D} d="M657 198 L671 222 H660 V265 H685 V247 L699 270 L685 293 V275 H660 V323 H667 L657 342 L646 323 H653 V275 H629 V293 L615 270 L629 247 V265 H653 V222 H643 Z" />,
  },
  {
    box: "800 84 264.8 372",
    wide: true,
    art: (
      <>
        <ellipse cx="902" cy="272" rx="26.5" ry="46" stroke={D} strokeWidth="5" />
        <path d="M923 306 L946 350" stroke={D} strokeWidth="5" />
        <path fill={D} d="M902 186 L916 210 H889 Z M902 360 L916 336 H889 Z M852 270 L866 246 V294 Z M953 270 L939 246 V294 Z" />
        <path d="M1014 255 L1030 282 L1046 255" stroke={D} strokeWidth="4" />
      </>
    ),
  },
  {
    box: "1100 84 216 372",
    art: (
      <>
        <path d="M1178 362 L1161 328 V232 C1161 165 1254 165 1254 232 V328 L1237 362" stroke={D} strokeWidth="4" strokeLinejoin="round" />
        <path d="M1163 235 C1166 250 1172 256 1182 260 M1252 235 C1249 250 1243 256 1233 260" stroke={D} strokeWidth="4" />
        <path d="M1163 226 C1166 170 1249 170 1252 226" stroke={D} strokeWidth="2" />
        <ellipse cx="1207" cy="223" rx="15" ry="11" stroke={D} strokeWidth="2.5" />
        <path d="M1201 232 L1180 272 V362 M1214 232 L1235 272 V362" stroke={D} strokeWidth="2.2" />
        <path stroke={D} strokeWidth="1.8" d="M1176 295 L1199 240 M1176 312 L1204 245 M1176 330 L1204 264 M1176 346 L1204 282 M1178 360 L1204 300 M1185 361 L1204 318 M1192 355 L1204 335 M1239 295 L1216 240 M1239 312 L1211 245 M1239 330 L1211 264 M1239 346 L1211 282 M1237 360 L1211 300 M1230 361 L1211 318 M1223 355 L1211 335" />
      </>
    ),
  },
  {
    box: "1351 84 216 372",
    art: (
      <>
        <path d="M1416 185 H1501 L1507 195 V345 L1501 355 H1416 L1410 345 V195 Z" stroke={D} strokeWidth="3" />
        <path fill={D} d="M1425 222 H1480 V241 H1436 V259 H1447 V250 H1492 V270 H1447 V264 H1436 V288 H1447 V280 H1492 V299 H1447 V293 H1436 V313 H1447 V309 H1492 V328 H1447 V318 H1430 V241 H1425 Z" />
      </>
    ),
  },
  {
    box: "67 84 211 372",
    art: (
      <>
        <path d="M113 164 H141 L151 181 V232 H122 L113 212 Z" fill="#d5d5d5" stroke={D} strokeWidth="3" />
        <path d="M113 164 L122 182 H150 M122 182 V232" stroke="#777" strokeWidth="2" />
        <path d="M134 246 V264 H176 V283" stroke={B} strokeWidth="4.5" strokeDasharray="13 3" />
        <path d="M190 236 H214 L231 268 V376 H172 L154 338 V300 H190 Z" fill="#fff" stroke={D} strokeWidth="3" />
        <path d="M190 236 L210 268 H231 M210 268 V336 H172 V376 M154 300 L172 336 M190 300 L210 336" stroke={D} strokeWidth="2.5" />
      </>
    ),
  },
  {
    box: "313 84 211 372",
    art: (
      <>
        <path d="M445 353 H370 V282 H445 C455 282 461 292 464 304" stroke={D} strokeWidth="3" />
        <path d="M426 290 V186 H465 V290" stroke={B} strokeWidth="3" strokeDasharray="9 4" />
        <path d="M426 298 V320 C428 364 463 364 465 320 V298" stroke={B} strokeWidth="3.5" />
        <ellipse cx="445" cy="318" rx="8" ry="15" stroke={D} strokeWidth="4" />
      </>
    ),
  },
  {
    box: "558 84 211 372",
    art: (
      <>
        <path d="M643 340 H624 V181 H702 V256" stroke={D} strokeWidth="3" />
        <path d="M640 214 H645 M651 214 H686 M640 234 H645 M651 234 H686 M640 255 H645 M651 255 H686" stroke={D} strokeWidth="3.5" />
        <path d="M648 322 C662 275 698 275 713 322 C698 368 662 368 648 322 Z" stroke={D} strokeWidth="4" fill="#fff" />
        <path d="M668 292 C655 320 668 350 680 350 C702 350 700 300 690 292 Z" fill={D} />
        <path d="M679 300 C670 300 668 318 674 322" stroke="#fff" strokeWidth="3" />
        <path d="M648 358 L708 258" stroke="#fff" strokeWidth="7" />
        <path d="M653 361 L713 261" stroke={D} strokeWidth="3.5" />
      </>
    ),
  },
  {
    box: "804 84 211 372",
    art: (
      <>
        <path d="M891 275 V240 C891 185 959 185 959 240 V295 C959 325 948 335 935 335 H857 V276 H925 C950 276 959 262 959 240" stroke={D} strokeWidth="3.5" />
        <path d="M891 240 C893 262 898 270 905 274" stroke={D} strokeWidth="3" />
        <ellipse cx="925" cy="240" rx="19" ry="18" stroke={D} strokeWidth="5" />
        <path d="M869 334 V317 M881 334 V302 M892 334 V317 M904 334 V317 M915 334 V317 M926 334 V302 M937 334 V317" stroke={D} strokeWidth="2" />
      </>
    ),
  },
  {
    box: "1049 84 211 372",
    art: (
      <>
        <path d="M1095 325 C1095 162 1213 162 1213 325 V337 H1095 Z" stroke={D} strokeWidth="4" strokeLinejoin="round" />
        <path d="M1098 328 H1210" stroke={D} strokeWidth="2" />
        <path d="M1116 312 C1116 220 1192 220 1192 312 H1167 C1165 285 1143 285 1141 312 Z" stroke={D} strokeWidth="4" />
        <path d="M1154 208 V222 M1143 210 L1145 224 M1165 210 L1163 224 M1132 217 L1136 231 M1176 217 L1172 231 M1121 231 L1127 242 M1187 231 L1181 242 M1112 249 L1119 258 M1196 249 L1189 258 M1105 268 L1113 275 M1203 268 L1195 275 M1101 289 L1109 293 M1207 289 L1199 293 M1099 309 L1107 311 M1209 309 L1201 311" stroke={D} strokeWidth="1.8" />
      </>
    ),
  },
  {
    box: "1294 84 211 372",
    art: (
      <>
        <path d="M1368 199 H1430 M1399 199 V326" stroke={D} strokeWidth="3.5" />
        <path d="M1370 205 L1361 282 M1372 205 L1382 282 M1428 205 L1437 282 M1426 205 L1416 282" stroke={D} strokeWidth="2" />
        <path d="M1357 281 H1387 V301 H1357 Z M1411 281 H1442 V301 H1411 Z M1357 324 H1442 V346 H1357 Z" fill={D} />
      </>
    ),
  },
];

function Toolbar() {
  return (
    <div className="absolute left-[1013px] top-[1784px] flex h-[152px] w-[1764px] gap-5 border-4 border-[#ddd] bg-white p-2.5">
      {tools.map((t, i) => (
        <div key={i} className={`h-[124px] shrink-0 rounded-md shadow-[inset_0_0_0_2px_#f5f5f5] ${t.wide ? "w-[152px]" : "w-[124px]"}`}>
          <svg className={`size-full ${NS}`} viewBox={t.box} preserveAspectRatio="none" fill="none">{t.art}</svg>
        </div>
      ))}
    </div>
  );
}

/* ---------- page ---------- */

function Banner() {
  return (
    <div className="absolute left-[1259px] top-[82px] flex h-[64px] w-[852px] items-center rounded-b-[20px] border-2 border-t-0 border-[#ccc] bg-white pl-[42px] text-[29px] font-bold text-[#404040]">
      <span className="w-[728px] whitespace-nowrap pt-[3px]">This document was shared via a link and is view only.</span>
      <HelpIcon color="#888" />
    </div>
  );
}

function TabBar() {
  return (
    <div className="flex h-[52px] shrink-0">
      <div className="h-full w-[74px] bg-[#fafafa]" />
      <div className="flex h-full w-[68px] justify-end bg-[#e2e2e2]">
        <svg className="mr-4 mt-1.5" width="32" height="30" viewBox="0 0 32 30" fill="#666"><path d="M14 0 L21 5 V2 H28 V10 L32 13 V30 H2 V9 Z" /></svg>
      </div>
      <div className="relative flex h-full w-[250px] items-start bg-[#ececec] pl-9">
        <svg className="absolute left-0 top-0" width="250" height="52" viewBox="0 0 250 52" fill="none">
          <path d="M-2 0 L18 24 V52" stroke="#ccc" strokeWidth="3" />
          <path d="M228 0 H250 V30 L240 14 Z" fill="#d3d3d3" />
        </svg>
        <svg className="relative mt-2.5" width="36" height="30" viewBox="0 0 36 30" fill="none" stroke="#333" strokeWidth="2"><path d="M1 29 V2 H12 L15 6 H35 V29 Z" /></svg>
        <span className="relative ml-4 mt-[13px]">Assembly</span>
      </div>
      <div className="flex h-full w-[400px] items-center bg-white pl-[23px]">
        <AssemblyIcon size={36} />
        <span className="ml-[7px] pt-[5px] text-[28px]">Robot</span>
      </div>
      <div className="h-full grow bg-[#d7d7d7]" />
    </div>
  );
}

export default function App() {
  return (
    <div className="relative flex h-[2036px] w-[3294px] flex-col overflow-hidden bg-white font-['Roboto',sans-serif] text-[27px] leading-none text-[#333]">
      <Header />
      <div className="flex h-[1906px] shrink-0">
        <div className="flex w-[74px] shrink-0 flex-col items-start border-r-2 border-t-2 border-[#d8d8d8] bg-[#fafafa] pl-[15px] pt-4">
          <svg className={NS} width="38" height="38" viewBox="33 290 83 110" preserveAspectRatio="none" fill="none" stroke="#333">
            <path d="M50 325 C62 295 98 300 107 330 C120 375 90 400 75 396 C60 394 50 382 46 368" strokeWidth="4" />
            <path d="M66 294 H91 M78 294 V306 M101 311 L109 317" strokeWidth="4" />
            <path d="M43 335 H64 M39 348 H60 M34 359 H55" strokeWidth="2.4" />
            <path d="M92 332 L84 352 L78 355 L76 348 Z" fill="#333" stroke="none" />
          </svg>
        </div>
        <div className="pt-[72px]"><InstancePanel /></div>
      </div>
      <TabBar />

      <Model />
      <ViewCube />
      <Banner />
      <Toolbar />

      <div className="absolute left-[484px] top-[1016px] flex h-[68px] w-[66px] items-center border-2 border-l-0 border-[#aaa] bg-white">
        <svg className="ml-3.5" width="37" height="36" viewBox="0 0 37 36" fill="none" stroke="#333" strokeWidth="2">
          <path d="M1 1.5 L6.5 6 L12 1.5" strokeWidth="3" />
          <path d="M16 2.5 H36 M10 12.5 H36 M10 22.5 H36 M10 32.5 H36 M6 10 V35" />
        </svg>
      </div>

      <div className="absolute bottom-0 left-0 flex h-[34px] w-[434px] items-center rounded-tr-lg bg-[#222] pl-1 pt-1.5 text-[25px] text-[#eee] shadow-[0_0_14px_rgba(0,0,0,0.6)]">
        <span className="whitespace-nowrap">https://cad.onshape.com/documents</span>
      </div>
    </div>
  );
}
